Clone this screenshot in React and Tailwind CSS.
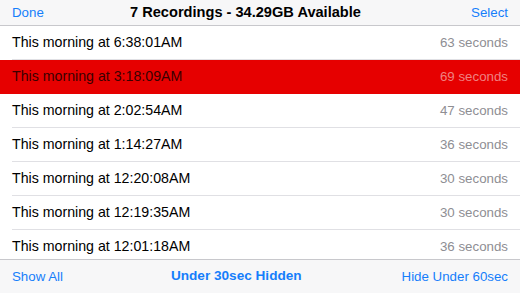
const recordings = [
  { time: '6:38:01AM', secs: 63 },
  { time: '3:18:09AM', secs: 69, selected: true },
  { time: '2:02:54AM', secs: 47 },
  { time: '1:14:27AM', secs: 36 },
  { time: '12:20:08AM', secs: 30 },
  { time: '12:19:35AM', secs: 30 },
  { time: '12:01:18AM', secs: 36 },
];

function Row({ time, secs, selected }) {
  return (
    <div className={`h-[34px] shrink-0 flex flex-col ${selected ? 'bg-[#e60000]' : 'bg-white'}`}>
      <div className="flex-1 flex items-center justify-between pl-3 pr-3">
        <span className={`text-[14.2px] ${selected ? 'text-[#3a0000]' : 'text-black'}`}>This morning at {time}</span>
        <span className={selected ? 'text-[#f08080]' : 'text-[#8e8e93]'}>{secs} seconds</span>
      </div>
      <div className={`h-px ml-3 ${selected ? 'bg-[#e60000]' : 'bg-[#e0e0e4]'}`} />
    </div>
  );
}

export default function App() {
  return (
    <div className="w-[520px] h-[293px] flex flex-col bg-white overflow-hidden text-[13.3px] font-['Liberation_Sans',Arial,sans-serif]">
      <div className="h-[26px] shrink-0 flex items-center justify-between px-3 bg-[#f7f7f8] border-b border-[#c8c8cc] relative">
        <span className="text-[#157efb]">Done</span>
        <span className="absolute left-0 right-0 pr-[29px] text-center font-bold text-black text-[14.6px] pointer-events-none">7 Recordings - 34.29GB Available</span>
        <span className="text-[#157efb]">Select</span>
      </div>
      <div className="flex-1 flex flex-col overflow-hidden">
        {recordings.map((r) => (
          <Row key={r.time} {...r} />
        ))}
      </div>
      <div className="h-[34px] shrink-0 flex items-center justify-between px-3 bg-[#f7f7f8] border-t border-[#c8c8cc]">
        <span className="text-[#157efb]">Show All</span>
        <span className="text-[#157efb] font-bold text-[13.6px] pl-[8px]">Under 30sec Hidden</span>
        <span className="text-[#157efb]">Hide Under 60sec</span>
      </div>
    </div>
  );
}
